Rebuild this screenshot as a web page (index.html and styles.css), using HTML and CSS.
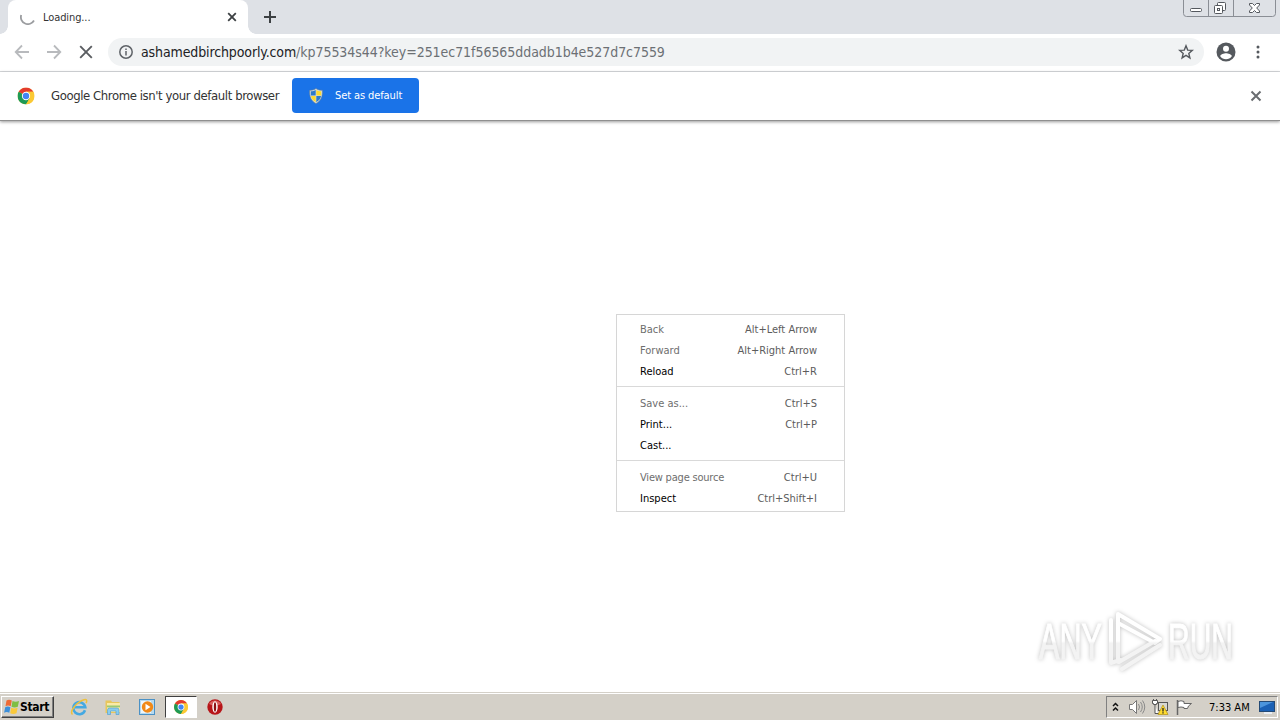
FILE: index.html
```html
<!DOCTYPE html>
<html lang="en">
<head>
    <title>Loading...</title>
    <meta charset="UTF-8">
    <link rel="stylesheet" href="styles.css">
</head>
<body>
    <svg class="defs">
        <symbol id="chrome" viewBox="0 0 16 16">
            <circle cx="8" cy="8" r="8" fill="#fbc934"/>
            <path d="M8 8L1.1 4A8 8 0 0 1 14.9 4H8z" fill="#e33b2e"/>
            <path d="M8 8L1.1 4A8 8 0 0 0 8 16l3.5-6z" fill="#1e9a55"/>
            <path d="M8 8V4h6.9A8 8 0 0 1 8 16l3.5-6z" fill="#fbc934"/>
            <circle cx="8" cy="8" r="3.9" fill="#fff"/>
            <circle cx="8" cy="8" r="3" fill="#4285f4"/>
        </symbol>
    </svg>

    <div class="tabstrip">
        <div class="tab">
            <svg class="spinner" width="16" height="16" viewBox="0 0 16 16"><path d="M1.2 6A7 7 0 0 0 14 11.500" fill="none" stroke="#9b9da0" stroke-width="1.8"/></svg>
            <span class="tab-title">Loading...</span>
            <svg width="10" height="10" viewBox="0 0 10 10"><path d="M1.2 1.2l7.6 7.6M8.8 1.2L1.2 8.8" stroke="#3c4043" stroke-width="1.8"/></svg>
        </div>
        <svg class="new-tab" width="12" height="12" viewBox="0 0 12 12"><path d="M6 0v12M0 6h12" stroke="#3c4043" stroke-width="2"/></svg>
        <div class="window-buttons">
            <svg width="97" height="17" viewBox="0 0 97 17">
                <path d="M.5 0v13.500q0 3 3 3h86q3 0 3-3V0M25.500 0v16M50.500 0v16" fill="none" stroke="#8a8e95"/>
                <g fill="#fff" stroke="#54585e">
                    <rect x="7.500" y="8.500" width="11" height="3" rx="1"/>
                    <rect x="34.500" y="2.500" width="8" height="8" rx="1"/>
                    <rect x="31.500" y="5.500" width="8" height="8" rx="1"/>
                    <rect x="34.500" y="8.500" width="2" height="2"/>
                    <path d="M66.500 3.500h3l2 2 2-2h3v1.500l-2.800 3 2.800 3v1.500h-3l-2-2-2 2h-3V11l2.800-3-2.800-3z"/>
                </g>
            </svg>
        </div>
    </div>

    <div class="toolbar">
        <svg class="nav" width="16" height="16" viewBox="0 0 16 16"><path d="M15 8H2M8 1.500L1.700 8 8 14.500" fill="none" stroke="#b8babd" stroke-width="1.800"/></svg>
        <svg class="nav" width="16" height="16" viewBox="0 0 16 16"><path d="M1 8h13M8 1.500L14.300 8 8 14.500" fill="none" stroke="#b8babd" stroke-width="1.800"/></svg>
        <svg class="nav" width="16" height="16" viewBox="0 0 16 16"><path d="M2.200 2.200l11.600 11.600M13.800 2.200L2.200 13.800" stroke="#5a5d61" stroke-width="1.900"/></svg>
        <div class="omnibox">
            <svg width="14" height="14" viewBox="0 0 14 14"><circle cx="7" cy="7" r="6.200" fill="none" stroke="#5f6368" stroke-width="1.500"/><path d="M7 6v4.500M7 3.400v1.500" stroke="#5f6368" stroke-width="1.500"/></svg>
            <div class="url"><span class="host">ashamedbirchpoorly.com</span><span class="path">/kp75534s44?key=251ec71f56565ddadb1b4e527d7c7559</span></div>
            <svg width="16" height="16" viewBox="0 0 16 16"><path d="M8 1.800l1.700 4.300 4.600.3-3.500 3 1.100 4.500L8 11.400l-3.900 2.500 1.100-4.500-3.500-3 4.600-.3z" fill="none" stroke="#55595e" stroke-width="1.400"/></svg>
        </div>
        <svg class="profile" width="20" height="20" viewBox="0 0 20 20"><circle cx="10" cy="10" r="9.500" fill="#55595e"/><circle cx="10" cy="6.700" r="3" fill="#fff"/><path d="M4.200 14.200c0-2 3.900-3 5.800-3s5.800 1 5.800 3a7 7 0 0 1-11.600 0z" fill="#fff"/></svg>
        <svg class="more" width="4" height="16" viewBox="0 0 4 16"><g fill="#55595e"><circle cx="2" cy="3" r="1.500"/><circle cx="2" cy="8" r="1.500"/><circle cx="2" cy="13" r="1.500"/></g></svg>
    </div>

    <div class="infobar">
        <svg width="18" height="18" viewBox="0 0 18 18"><use href="#chrome" x=".5" y=".5" width="17" height="17"/></svg>
        <span class="info-text">Google Chrome isn't your default browser</span>
        <button class="default-button">
            <svg width="14" height="16" viewBox="0 0 14 16">
                <path d="M7 .5c2 1.500 4 1.800 6.300 1.800.5 6-1.300 10.700-6.300 13.200C2 13 .2 8.300.7 2.300 3 2.300 5 2 7 .5z" fill="#d9dfe2" stroke="#68808e" stroke-width=".6"/>
                <path d="M6.700 2v5.500H1.800V3.300C4 3.300 5.300 3 6.700 2z" fill="#2c79c9"/>
                <path d="M7.300 2v5.500h4.900V3.300C10 3.300 8.700 3 7.300 2z" fill="#fbd92f"/>
                <path d="M6.700 8v6.200C3.800 12.500 2.300 10.500 2 8z" fill="#fbd92f"/>
                <path d="M7.300 8v6.200c2.900-1.700 4.400-3.700 4.700-6.200z" fill="#2c79c9"/>
            </svg>
            <span class="button-text">Set as default</span>
        </button>
        <svg class="info-close" width="12" height="12" viewBox="0 0 12 12"><path d="M1.500 1.500l9 9M10.500 1.500l-9 9" stroke="#6a6d71" stroke-width="2"/></svg>
    </div>

    <div class="page">
        <div class="menu">
            <div class="item disabled"><span>Back</span><span class="key">Alt+Left Arrow</span></div>
            <div class="item disabled"><span>Forward</span><span class="key">Alt+Right Arrow</span></div>
            <div class="item"><span>Reload</span><span class="key">Ctrl+R</span></div>
            <div class="line"></div>
            <div class="item disabled"><span>Save as...</span><span class="key">Ctrl+S</span></div>
            <div class="item"><span>Print...</span><span class="key">Ctrl+P</span></div>
            <div class="item"><span>Cast...</span></div>
            <div class="line"></div>
            <div class="item disabled"><span class="source">View page source</span><span class="key">Ctrl+U</span></div>
            <div class="item"><span>Inspect</span><span class="key">Ctrl+Shift+I</span></div>
        </div>
        <div class="watermark">
            <svg width="240" height="72" viewBox="0 0 240 72">
                <defs>
                    <linearGradient id="fade" gradientUnits="userSpaceOnUse" x1="0" y1="0" x2="0" y2="72">
                        <stop offset=".5" stop-color="#fff"/>
                        <stop offset=".53" stop-color="#f3f3f3"/>
                    </linearGradient>
                </defs>
                <g class="mark" fill="url(#fade)" stroke="url(#fade)">
                    <text x="5" y="54" textLength="63" lengthAdjust="spacingAndGlyphs">ANY</text>
                    <text x="134" y="54" textLength="65" lengthAdjust="spacingAndGlyphs">RUN</text>
                    <path d="M84 57V9l42 25-5 4-37-20M77 15v43l9-3M88 64l38-24M85 57l36-21" fill="none" stroke-width="4" stroke-linejoin="round" stroke-linecap="round"/>
                </g>
            </svg>
        </div>
    </div>

    <div class="taskbar">
        <div class="start">
            <svg width="17" height="16" viewBox="0 0 16 16">
                <path d="M3 1.500q2.500-1.500 5.300 0L7.200 7.300q-2.700-1.500-5.200 0z" fill="#ee6a35"/>
                <path d="M9 2q3 1.500 6.500 0l-1.200 5.800q-3.300 1.500-6.300 0z" fill="#7fbe43"/>
                <path d="M1.700 8.200q2.500-1.500 5.200 0l-1.100 5.500q-2.700-1.500-5.200 0z" fill="#3c8fda"/>
                <path d="M7.700 8.700q3 1.500 6.400 0L13 14.300q-3.300 1.500-6.300 0z" fill="#fac93a"/>
            </svg>
            <span>Start</span>
        </div>
        <div class="quick">
            <svg width="18" height="18" viewBox="0 0 18 18"><path d="M15 12.300A6 6 0 1 1 15.300 9.300H5" fill="none" stroke="#45a9e2" stroke-width="2.600"/><path d="M2.500 16.500C-1 13 7 4 14 1.800c3-.9 3.200 1.200 2 3.200" fill="none" stroke="#eec13c" stroke-width="1.500"/></svg>
        </div>
        <div class="quick">
            <svg width="18" height="18" viewBox="0 0 18 18"><path d="M1.500 2.500h5.500l1 1.500h7.500V15h-14z" fill="#e8c65b"/><path d="M3 5h13v9H3z" fill="#faeaa6"/><path d="M3 7.500h13v1.800H3z" fill="#9bc973"/><path d="M3.500 16.500v-4.500q0-2 2-2h7.500q2 0 2 2v4.500h-3v-3.500h-5.500v3.500z" fill="#8accee" stroke="#469bd0" stroke-width=".6"/></svg>
        </div>
        <div class="quick">
            <svg width="18" height="18" viewBox="0 0 18 18"><rect x="1.500" y="1.500" width="15" height="15" fill="#b6daf0" stroke="#4b91c5"/><rect x="3" y="3" width="10" height="12" fill="#edf6fb"/><circle cx="9.500" cy="9" r="5.700" fill="#f18917"/><path d="M7.500 5.800l5 3.200-5 3.200z" fill="#fff"/></svg>
        </div>
        <div class="quick active">
            <svg width="14" height="14"><use href="#chrome"/></svg>
        </div>
        <div class="quick">
            <svg width="18" height="18" viewBox="0 0 18 18"><circle cx="9" cy="9" r="7.700" fill="#b71519"/><path d="M3 6a7 7 0 0 1 12 0q-6 3-12 0z" fill="#d8605f"/><ellipse cx="9" cy="9" rx="2.700" ry="5.700" fill="#fff"/><ellipse cx="9" cy="9" rx="1.200" ry="4.700" fill="#8c1013"/></svg>
        </div>
        <div class="tray">
            <svg class="chevrons" width="7" height="10" viewBox="0 0 7 10"><path d="M1 4l2.500-2.500L6 4M1 8.500L3.500 6 6 8.500" fill="none" stroke="#111" stroke-width="1.500"/></svg>
            <svg width="18" height="16" viewBox="0 0 18 16"><path d="M1.500 5.500h3l4-4v13l-4-4h-3z" fill="#fff" stroke="#777"/><path d="M10.500 5q2 3 0 6M12.500 3q3.500 5 0 10M14.500 1.500q4.500 6.500 0 13" fill="none" stroke="#8a8a8a"/></svg>
            <svg width="18" height="16" viewBox="0 0 18 16"><rect x="6.500" y="3.500" width="9" height="8" fill="#d8d8d2" stroke="#555"/><path d="M5 14.500h5" stroke="#666"/><path d="M.5 1.500h5v3h-1v1h-3v-1h-1zM1.500 1.500V0M4.500 1.500V0M3 5.500v9h3" fill="#fff" stroke="#555"/><path d="M11 6l5 9.500H6z" fill="#ffdc2e" stroke="#b19012" stroke-width=".7"/><path d="M11 9v3.500M11 13.200v1.300" stroke="#222" stroke-width="1.300"/></svg>
            <svg width="18" height="16" viewBox="0 0 18 16"><path d="M1.500 1v15" stroke="#666" stroke-width="1.500"/><path d="M2 2.500q3-1.500 6 0v2h7.500l-3 2.500-1 2.500H8v-1q-3-1-6 0z" fill="#fff" stroke="#666"/></svg>
            <span class="clock">7:33 AM</span>
            <svg width="16" height="14" viewBox="0 0 16 14"><rect x=".5" y="1.500" width="15" height="10" fill="#1b61b5" stroke="#244a75"/><path d="M1 2h13L1 8z" fill="#4c95dc"/><path d="M5 13h8" stroke="#e9eef4" stroke-width="2"/></svg>
        </div>
    </div>
</body>
</html>
```

FILE: styles.css
```css
* {
    box-sizing: border-box;
}
body {
    margin: 0;
    width: 1280px;
    height: 720px;
    overflow: hidden;
    display: flex;
    flex-direction: column;
    background: #fff;
    color: #333;
    font-family: "DejaVu Sans Condensed", "DejaVu Sans", sans-serif;
    font-stretch: condensed;
    font-size: 11px;
    white-space: nowrap;
}
svg {
    display: block;
    flex: none;
}
.defs {
    display: none;
}

/* tabs */
.tabstrip {
    display: flex;
    height: 34px;
    padding-left: 8px;
    background: #dee1e6;
}
.tab {
    position: relative;
    display: flex;
    align-items: center;
    width: 240px;
    padding: 0 11px 0 12px;
    background: #fff;
    border-radius: 8px 8px 0 0;
}
.tab::before,
.tab::after {
    content: "";
    position: absolute;
    bottom: 0;
    width: 8px;
    height: 8px;
}
.tab::before {
    left: -8px;
    background: radial-gradient(circle at 0 0, #dee1e6 7.5px, #fff 8px);
}
.tab::after {
    right: -8px;
    background: radial-gradient(circle at 100% 0, #dee1e6 7.5px, #fff 8px);
}
.tab-title {
    flex: 1;
    margin-left: 7px;
    letter-spacing: -0.1px;
}
.new-tab {
    margin: 11px 0 0 16px;
}
.window-buttons {
    margin-left: auto;
}

/* address bar */
.toolbar {
    display: flex;
    align-items: center;
    height: 38px;
    padding: 0 20px 2px 14px;
    border-bottom: 1px solid #d9dbde;
}
.nav {
    margin-right: 16px;
}
.omnibox {
    display: flex;
    align-items: center;
    width: 1096px;
    height: 28px;
    margin-left: -2px;
    padding: 0 10px 0 11px;
    border-radius: 14px;
    background: #f1f3f4;
}
.url {
    flex: 1;
    margin-left: 8px;
    font-size: 14px;
    color: #6c7074;
}
.host {
    letter-spacing: -0.12px;
    color: #202124;
}
.path {
    letter-spacing: -0.05px;
}
.profile {
    margin-left: 12px;
}
.more {
    margin-left: 20px;
}

/* default browser bar */
.infobar {
    display: flex;
    align-items: center;
    height: 49px;
    padding: 0 18px 1px 17px;
    border-bottom: 1px solid #8f8f8f;
    box-shadow: 0 1px 3px rgba(0, 0, 0, 0.4);
}
.info-text {
    width: 228px;
    margin-left: 16px;
    font-size: 13px;
    letter-spacing: -0.41px;
}
.default-button {
    display: flex;
    align-items: center;
    width: 127px;
    height: 35px;
    margin-left: 13px;
    padding: 0 0 0 17px;
    border: none;
    border-radius: 4px;
    background: #1a73e8;
    color: #fff;
    font: inherit;
}
.button-text {
    margin-left: 12px;
    letter-spacing: -0.1px;
}
.info-close {
    margin-left: auto;
}

/* page and context menu */
.page {
    position: relative;
    flex: 1;
}
.menu {
    position: absolute;
    left: 616px;
    top: 193px;
    width: 229px;
    height: 198px;
    padding-top: 4px;
    border: 1px solid #d6d6d6;
    background: #fff;
}
.item {
    display: flex;
    justify-content: space-between;
    height: 21px;
    padding: 0 27px 0 23px;
    line-height: 21px;
    color: #000;
}
.disabled {
    color: #6e6e6e;
}
.key {
    color: #5c5c5c;
}
.source {
    letter-spacing: -0.2px;
}
.line {
    height: 1px;
    margin: 4px 0 6px;
    background: #d9d9d9;
}
.watermark {
    position: absolute;
    left: 1034px;
    top: 484px;
}
.mark {
    font-family: "Liberation Sans", Arial, sans-serif;
    font-size: 50px;
    filter: drop-shadow(0 0 2px rgba(0, 0, 0, 0.25));
}

/* taskbar */
.taskbar {
    display: flex;
    align-items: center;
    height: 28px;
    padding: 2px 2px 1px 1px;
    border-top: 1px solid #d4d0c8;
    background: #d4d0c8;
    box-shadow: inset 0 1px #fff;
}
.start {
    display: flex;
    align-items: center;
    width: 53px;
    height: 22px;
    margin-right: 9px;
    padding-left: 1px;
    border: 1px solid;
    border-color: #fff #404040 #404040 #fff;
    box-shadow: inset -1px -1px #808080;
    font-size: 12px;
    font-weight: bold;
    letter-spacing: -0.3px;
    color: #000;
}
.quick {
    display: flex;
    align-items: center;
    justify-content: center;
    width: 32px;
    height: 22px;
    margin-right: 2px;
}
.active {
    border: 1px solid;
    border-color: #404040 #fff #fff #404040;
    background: #fff;
}
.tray {
    display: flex;
    align-items: center;
    width: 172px;
    height: 22px;
    margin-left: auto;
    padding-left: 5px;
    border: 1px solid;
    border-color: #808080 #fff #fff #808080;
    color: #000;
}
.tray svg {
    margin-right: 6px;
}
.tray .chevrons {
    margin-right: 9px;
}
.clock {
    width: 41px;
    margin: 0 9px 0 9px;
}
```
